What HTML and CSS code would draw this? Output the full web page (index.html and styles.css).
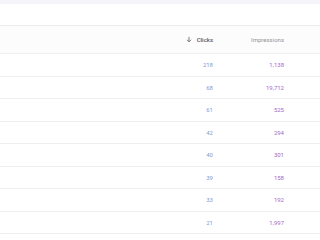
FILE: index.html
```html
<!DOCTYPE html>
<html>
<head>
<meta charset="utf-8">
<link rel="stylesheet" href="styles.css">
</head>
<body>
<div class="topbar"></div>
<div class="toolbar"></div>
<div class="table">
  <div class="row head">
    <div class="cell name"></div>
    <div class="cell num clicks-h">
      <svg class="arrow" viewBox="0 0 8 8" width="6" height="7"><path d="M4 0.5V7M1.2 4.3L4 7.1L6.8 4.3" fill="none" stroke="#555" stroke-width="1"/></svg>
      <span>Clicks</span>
    </div>
    <div class="cell num impr-h">Impressions</div>
  </div>
  <div class="row"><div class="cell name"></div><div class="cell num clicks">218</div><div class="cell num impr">1,138</div></div>
  <div class="row"><div class="cell name"></div><div class="cell num clicks">68</div><div class="cell num impr">19,712</div></div>
  <div class="row"><div class="cell name"></div><div class="cell num clicks">61</div><div class="cell num impr">525</div></div>
  <div class="row"><div class="cell name"></div><div class="cell num clicks">42</div><div class="cell num impr">294</div></div>
  <div class="row"><div class="cell name"></div><div class="cell num clicks">40</div><div class="cell num impr">301</div></div>
  <div class="row"><div class="cell name"></div><div class="cell num clicks">39</div><div class="cell num impr">158</div></div>
  <div class="row"><div class="cell name"></div><div class="cell num clicks">33</div><div class="cell num impr">192</div></div>
  <div class="row"><div class="cell name"></div><div class="cell num clicks">21</div><div class="cell num impr">1,997</div></div>
</div>
</body>
</html>
```

FILE: styles.css
```css
html, body {
  margin: 0;
  padding: 0;
  background: #ffffff;
  font-family: Roboto, "Liberation Sans", sans-serif;
  overflow: hidden;
}
.topbar {
  height: 3.5px;
  background: #f4f4fa;
}
.toolbar {
  height: 21.5px;
  background: #ffffff;
  border-bottom: 1px solid #ececef;
}
.table {
  display: flex;
  flex-direction: column;
}
.row {
  display: grid;
  grid-template-columns: 1fr 60px 71px 36px;
  height: 21.5px;
  align-items: center;
  border-bottom: 1px solid #efeff1;
  font-size: 6px;
}
.row.head {
  height: 27px;
  background: #fcfcfd;
}
.cell.num {
  text-align: right;
  display: flex;
  justify-content: flex-end;
  align-items: center;
}
.clicks-h {
  color: #555558;
  font-weight: 500;
  gap: 5px;
}
.arrow {
  display: block;
}
.impr-h {
  color: #939398;
}
.clicks {
  color: #7f9cd8;
}
.impr {
  color: #a369c4;
}
```
